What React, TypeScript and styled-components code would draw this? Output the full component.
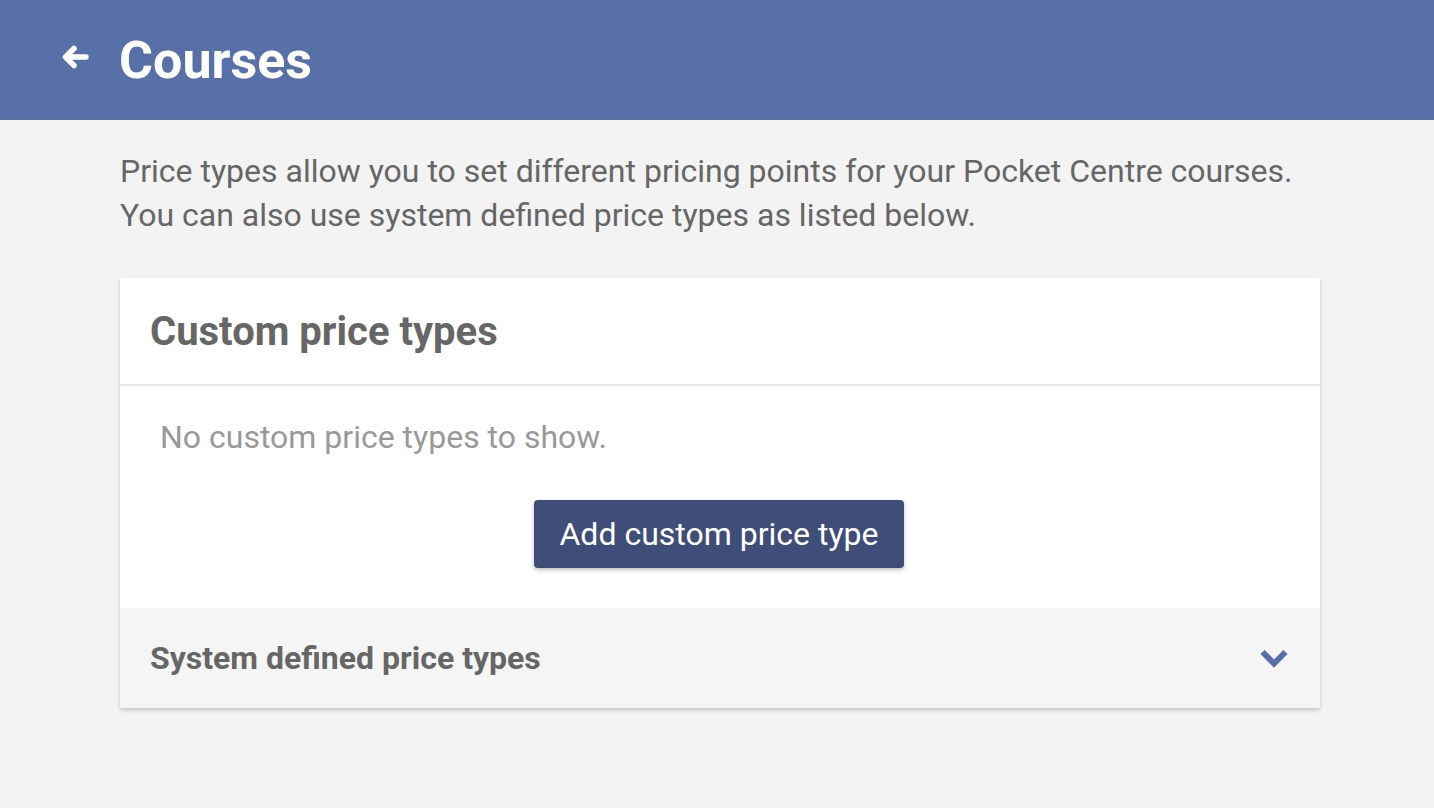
import styled, { createGlobalStyle } from "styled-components";

const Global = createGlobalStyle`
  html, body { margin: 0; padding: 0; }
  body {
    background: #f3f3f3;
    font-family: Roboto, "Noto Sans", Arial, sans-serif;
    color: #666;
  }
`;

const Page = styled.div`
  min-height: 808px;
  background: #f3f3f3;
`;

const TopBar = styled.header`
  height: 120px;
  background: #5870a8;
  display: flex;
  align-items: center;
  padding-left: 61px;
  gap: 30px;
  box-sizing: border-box;
`;

const BackBtn = styled.button`
  border: none;
  background: none;
  padding: 0 0 6px;
  display: flex;
  align-items: center;
  color: #fff;
  cursor: pointer;
`;

const Title = styled.h1`
  margin: 0;
  font-size: 52px;
  font-weight: 700;
  color: #fff;
`;

const Main = styled.main`
  width: 1200px;
  margin-left: 120px;
  padding-top: 29px;
`;

const Intro = styled.p`
  margin: 0 0 41px;
  font-size: 32px;
  line-height: 44px;
  color: #666;
`;

const Card = styled.section`
  background: #fff;
  box-shadow: 0 2px 4px rgba(0, 0, 0, 0.2);
`;

const CardHead = styled.div`
  height: 108px;
  border-bottom: 2px solid #e8e8e8;
  display: flex;
  align-items: center;
  padding: 0 30px;
  box-sizing: border-box;
`;

const CardTitle = styled.h2`
  margin: 0;
  font-size: 40px;
  font-weight: 700;
  color: #666;
`;

const CardBody = styled.div`
  padding: 33px 40px 40px;
  display: flex;
  flex-direction: column;
`;

const Empty = styled.p`
  margin: 0 0 44px;
  font-size: 32px;
  line-height: 37px;
  color: #999;
`;

const AddBtn = styled.button`
  align-self: center;
  height: 68px;
  padding: 0 25px;
  margin-left: -2px;
  border: none;
  border-radius: 4px;
  background: #3f4e78;
  color: #fff;
  font-family: inherit;
  font-size: 32px;
  box-shadow: 0 2px 4px rgba(0, 0, 0, 0.25);
  cursor: pointer;
`;

const Accordion = styled.div`
  height: 100px;
  background: #f5f5f5;
  display: flex;
  align-items: center;
  justify-content: space-between;
  padding: 0 31px 0 30px;
`;

const AccTitle = styled.h3`
  margin: 0;
  font-size: 32px;
  font-weight: 700;
  color: #666;
`;

function ArrowLeft() {
  return (
    <svg width="28" height="26" viewBox="0 0 28 26" fill="none">
      <path d="M25 13H5M13 4.5L4.5 13l8.5 8.5" stroke="#fff" strokeWidth="5.5" strokeLinecap="round" strokeLinejoin="round" />
    </svg>
  );
}

function Chevron() {
  return (
    <svg width="30" height="22" viewBox="0 0 30 22" fill="none">
      <path d="M3.5 5L15 16.5 26.5 5" stroke="#5870a8" strokeWidth="6" strokeLinejoin="miter" />
    </svg>
  );
}

export default function App() {
  return (
    <Page>
      <Global />
      <TopBar>
        <BackBtn aria-label="Back">
          <ArrowLeft />
        </BackBtn>
        <Title>Courses</Title>
      </TopBar>
      <Main>
        <Intro>
          Price types allow you to set different pricing points for your Pocket Centre courses.
          <br />
          You can also use system defined price types as listed below.
        </Intro>
        <Card>
          <CardHead>
            <CardTitle>Custom price types</CardTitle>
          </CardHead>
          <CardBody>
            <Empty>No custom price types to show.</Empty>
            <AddBtn>Add custom price type</AddBtn>
          </CardBody>
          <Accordion>
            <AccTitle>System defined price types</AccTitle>
            <Chevron />
          </Accordion>
        </Card>
      </Main>
    </Page>
  );
}
